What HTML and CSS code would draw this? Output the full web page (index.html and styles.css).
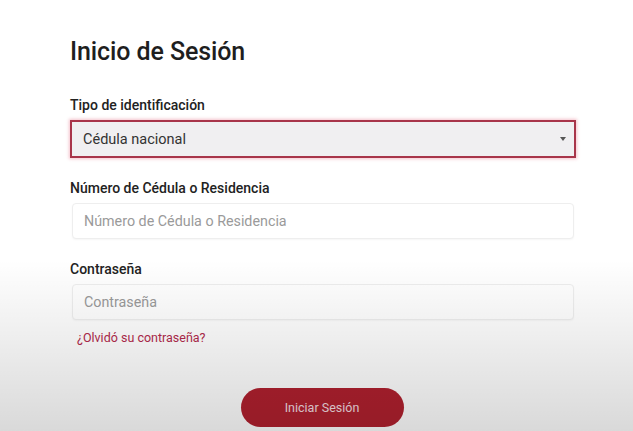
FILE: index.html
```html
<!DOCTYPE html>
<html lang="es">
<head>
<meta charset="utf-8">
<title>Inicio de Sesión</title>
<link rel="stylesheet" href="styles.css">
</head>
<body>
<main class="page">
  <form class="login">
    <h1 class="title">Inicio de Sesión</h1>
    <div class="field">
      <label class="label">Tipo de identificación</label>
      <div class="select">
        <span class="select-value">Cédula nacional</span>
        <span class="caret"></span>
      </div>
    </div>
    <div class="field">
      <label class="label">Número de Cédula o Residencia</label>
      <div class="input"><span class="placeholder">Número de Cédula o Residencia</span></div>
    </div>
    <div class="field field-last">
      <label class="label">Contraseña</label>
      <div class="input"><span class="placeholder">Contraseña</span></div>
    </div>
    <a class="forgot" href="#">¿Olvidó su contraseña?</a>
    <div class="actions">
      <button type="button" class="btn">Iniciar Sesión</button>
    </div>
  </form>
  <div class="shade"></div>
</main>
</body>
</html>
```
FILE: styles.css
```css
* { box-sizing: border-box; }
html, body { margin: 0; padding: 0; }
body {
  background: #ffffff;
  font-family: Roboto, "Liberation Sans", Arial, sans-serif;
  color: #222;
  width: 633px;
  height: 431px;
  overflow: hidden;
}
.page {
  position: relative;
  width: 633px;
  height: 431px;
  overflow: hidden;
}
.login {
  display: flex;
  flex-direction: column;
  width: 506px;
  margin-left: 70px;
  padding-top: 37px;
}
.title {
  margin: 0;
  font-size: 25px;
  line-height: 29px;
  font-weight: 500;
  color: #1e1e1e;
  letter-spacing: -0.1px;
}
.field {
  display: flex;
  flex-direction: column;
}
.field:first-of-type { margin-top: 31px; }
.field + .field { margin-top: 22px; }
.label {
  font-size: 14px;
  line-height: 16px;
  font-weight: 500;
  color: #222;
  margin-bottom: 7px;
}
.select {
  display: flex;
  align-items: center;
  justify-content: space-between;
  height: 38px;
  padding: 0 8px 0 11px;
  background: #f0eff1;
  border: 2px solid #a8354a;
  box-shadow: 0 0 3px 1px rgba(230, 120, 140, 0.45);
}
.select-value {
  font-size: 14.5px;
  color: #333;
}
.caret {
  width: 0;
  height: 0;
  border-left: 3.5px solid transparent;
  border-right: 3.5px solid transparent;
  border-top: 4px solid #555;
}
.input {
  display: flex;
  align-items: center;
  height: 36px;
  margin: 0 2px;
  padding: 0 11px;
  background: #fff;
  border: 1px solid #eeeeee;
  border-radius: 4px;
  box-shadow: 0 1px 2px rgba(0, 0, 0, 0.04);
}
.placeholder {
  font-size: 14.3px;
  color: #9a9a9a;
}
.forgot {
  margin-top: 10px;
  margin-left: 7px;
  font-size: 12.5px;
  line-height: 15px;
  color: #b22a4c;
  text-decoration: none;
}
.actions {
  display: flex;
  justify-content: center;
  margin-top: 43px;
  padding-right: 2px;
}
.btn {
  width: 163px;
  height: 39px;
  border: none;
  border-radius: 20px;
  background: #b0202e;
  color: #f4dde0;
  font-family: Roboto, "Liberation Sans", Arial, sans-serif;
  font-size: 12.5px;
}
.shade {
  position: absolute;
  left: 0;
  right: 0;
  top: 260px;
  bottom: 0;
  pointer-events: none;
  background: linear-gradient(to bottom, rgba(0,0,0,0) 0%, rgba(0,0,0,0.06) 40%, rgba(0,0,0,0.15) 100%);
}
```
